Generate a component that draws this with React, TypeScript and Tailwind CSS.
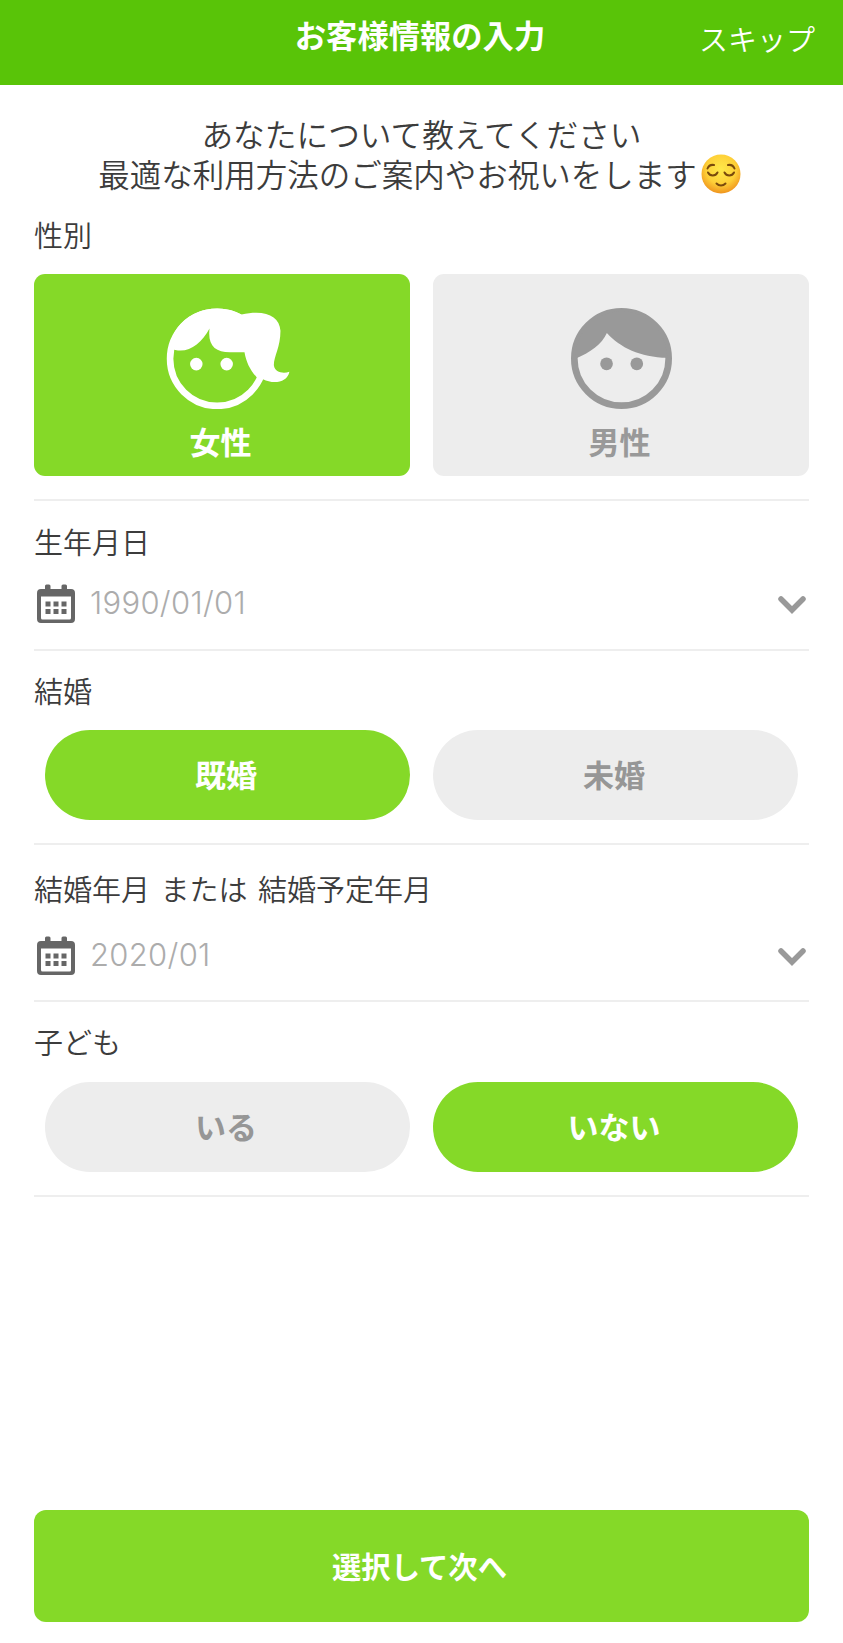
import { useState } from 'react'
import type { ReactNode } from 'react'

const jp = "font-['Noto_Sans_CJK_JP','Liberation_Sans',sans-serif]"

function FemaleIcon() {
  return (
    <svg viewBox="48 36 372 306" className="mt-px ml-3 h-[101px] w-[124px]" fill="currentColor">
      <circle cx="201" cy="190" r="142.5" fill="none" stroke="currentColor" strokeWidth="20" />
      <path d="M58 157 C105 180 150 150 178 98 C172 150 195 170 240 170 L284 170 C289 200 302 226 322 247 L340 252 C372 268 414 262 420 229 C400 236 376 230 373 210 C372 184 393 155 393 105 C390 60 346 40 275 56 C235 33 180 30 130 54 C90 75 62 110 58 157Z" />
      <circle cx="138" cy="206" r="19" />
      <circle cx="230" cy="206" r="19" />
    </svg>
  )
}

function MaleIcon() {
  return (
    <svg viewBox="452 143 304 304" className="mt-px ml-px h-[101px] w-[101px]" fill="currentColor">
      <circle cx="604" cy="295" r="142" fill="none" stroke="currentColor" strokeWidth="20" />
      <path d="M465 296 C510 276 545 252 560 218 C600 262 660 291 742 293 C738 210 680 153 604 153 C530 153 466 210 465 296Z" />
      <circle cx="559" cy="311" r="19" />
      <circle cx="650" cy="311" r="19" />
    </svg>
  )
}

function RelievedFace() {
  return (
    <svg viewBox="0 0 40 40" className="mt-px ml-1 inline-block h-10 w-10 align-top" fill="none">
      <defs>
        <radialGradient id="face" cx="0.5" cy="0.38" r="0.64">
          <stop offset="0" stopColor="#ffe94a" />
          <stop offset="0.6" stopColor="#fed038" />
          <stop offset="1" stopColor="#ee8f1c" />
        </radialGradient>
      </defs>
      <circle cx="20" cy="20" r="19.5" fill="url(#face)" />
      <g stroke="#7a4a0c" strokeWidth="2" strokeLinecap="round">
        <path d="M6.500 14.500c1-2.500 3.500-4 6.500-3.500" />
        <path d="M33.500 14.500c-1-2.500-3.500-4-6.500-3.500" />
        <path d="M7 18.500c2 4 7.500 4 9.500 0" />
        <path d="M23.500 18.500c2 4 7.500 4 9.500 0" />
        <path d="M15.500 29.500c2.500 2.500 6.500 2.500 9 0" />
      </g>
    </svg>
  )
}

function CalendarIcon() {
  return (
    <svg viewBox="0 0 38 40" className="h-10 w-[38px] text-[#666]" fill="currentColor">
      <path fillRule="evenodd" d="M4 5h4V2a1.500 1.500 0 0 1 1.500-1.500h2.500A1.500 1.500 0 0 1 13.500 2v3h11V2A1.500 1.500 0 0 1 26 .500h2.500A1.500 1.500 0 0 1 30 2v3h4a4 4 0 0 1 4 4v26a4 4 0 0 1-4 4H4a4 4 0 0 1-4-4V9a4 4 0 0 1 4-4ZM4 12.500V34a1.500 1.500 0 0 0 1.500 1.500h27A1.500 1.500 0 0 0 34 34V12.500Z" />
      <path d="M8.500 17.500h5v5h-5zM16.500 17.500h5v5h-5zM24.500 17.500h5v5h-5zM8.500 25h5v5h-5zM16.500 25h5v5h-5zM24.500 25h5v5h-5z" />
    </svg>
  )
}

function Label({ children }: { children: ReactNode }) {
  return (
    <h2 className="h-10 pt-px text-[29px] leading-10 font-[350] [word-spacing:4px] whitespace-pre text-[#3c3c3c]">
      {children}
    </h2>
  )
}

function DateField({ value }: { value: string }) {
  return (
    <button className="flex h-[60px] w-full items-center px-[3px]">
      <CalendarIcon />
      <span className="mb-px ml-[15px] font-['Inter',sans-serif] text-[31px] font-light tracking-[0.3px] text-[#acacac]">
        {value}
      </span>
      <svg viewBox="0 0 28 20" className="mt-[2px] ml-auto h-5 w-7" fill="none">
        <path d="M3 4 14 15 25 4" stroke="#999" strokeWidth="5.500" strokeLinecap="round" />
      </svg>
    </button>
  )
}

type ChoiceProps = {
  selected: boolean
  onClick: () => void
  children: ReactNode
}

function Pill({ selected, onClick, children }: ChoiceProps) {
  return (
    <button
      onClick={onClick}
      className={`h-[90px] flex-1 rounded-full pr-[3px] pb-[2px] text-[31px] font-bold ${
        selected ? 'bg-[#85d928] text-white' : 'bg-[#ededed] text-[#969696]'
      }`}
    >
      {children}
    </button>
  )
}

function GenderCard({ selected, onClick, children }: ChoiceProps) {
  return (
    <button
      onClick={onClick}
      className={`flex h-[202px] flex-1 flex-col items-center rounded-[11px] pt-[33px] text-[31px] leading-10 font-bold ${
        selected ? 'bg-[#85d928] text-white' : 'bg-[#ededed] text-[#999]'
      }`}
    >
      {children}
    </button>
  )
}

export default function App() {
  const [gender, setGender] = useState('female')
  const [married, setMarried] = useState(true)
  const [hasChildren, setHasChildren] = useState(false)

  return (
    <div className={`min-h-[1643px] w-full bg-white ${jp}`} lang="ja">
      <header className="grid h-[85px] grid-cols-[1fr_auto_1fr] bg-[#59c408] text-white">
        <h1 className="col-start-2 pt-[15px] pr-[3px] text-[31.300px] leading-10 font-bold">お客様情報の入力</h1>
        <button className="mr-[28px] justify-self-end self-start pt-[18px] text-[29px] leading-10 font-[350]">スキップ</button>
      </header>

      <main className="px-[34px] pt-[28px]">
        <div className="text-center text-[31.500px] leading-10 font-[350] whitespace-nowrap text-[#3c3c3c]">
          <p className="text-[31.700px]">あなたについて教えてください</p>
          <p className="h-10 pr-[4px]">
            最適な利用方法のご案内やお祝いをします
            <RelievedFace />
          </p>
        </div>

        <section className="border-b-2 border-[#eee] pt-5 pb-[23px]">
          <Label>性別</Label>
          <div className="mt-[21px] flex gap-[23px]">
            <GenderCard selected={gender === 'female'} onClick={() => setGender('female')}>
              <FemaleIcon />
              <span className="mt-3 pr-[3px]">女性</span>
            </GenderCard>
            <GenderCard selected={gender === 'male'} onClick={() => setGender('male')}>
              <MaleIcon />
              <span className="mt-3 pr-[3px]">男性</span>
            </GenderCard>
          </div>
        </section>

        <section className="border-b-2 border-[#eee] pt-[19px] pb-[15px]">
          <Label>生年月日</Label>
          <div className="mt-[14px]">
            <DateField value="1990/01/01" />
          </div>
        </section>

        <section className="border-b-2 border-[#eee] pt-[18px] pb-[23px]">
          <Label>結婚</Label>
          <div className="mt-[21px] flex gap-[23px] px-[11px]">
            <Pill selected={married} onClick={() => setMarried(true)}>既婚</Pill>
            <Pill selected={!married} onClick={() => setMarried(false)}>未婚</Pill>
          </div>
        </section>

        <section className="border-b-2 border-[#eee] pt-[22px] pb-[14px]">
          <Label>結婚年月 または 結婚予定年月</Label>
          <div className="mt-[19px]">
            <DateField value="2020/01" />
          </div>
        </section>

        <section className="border-b-2 border-[#eee] pt-[18px] pb-[23px]">
          <Label>子ども</Label>
          <div className="mt-[22px] flex gap-[23px] px-[11px]">
            <Pill selected={hasChildren} onClick={() => setHasChildren(true)}>いる</Pill>
            <Pill selected={!hasChildren} onClick={() => setHasChildren(false)}>いない</Pill>
          </div>
        </section>

        <button className="mt-[313px] h-[112px] w-full rounded-[12px] bg-[#85d928] pr-[4px] text-[29.300px] font-bold text-white">
          選択して次へ
        </button>
      </main>
    </div>
  )
}
